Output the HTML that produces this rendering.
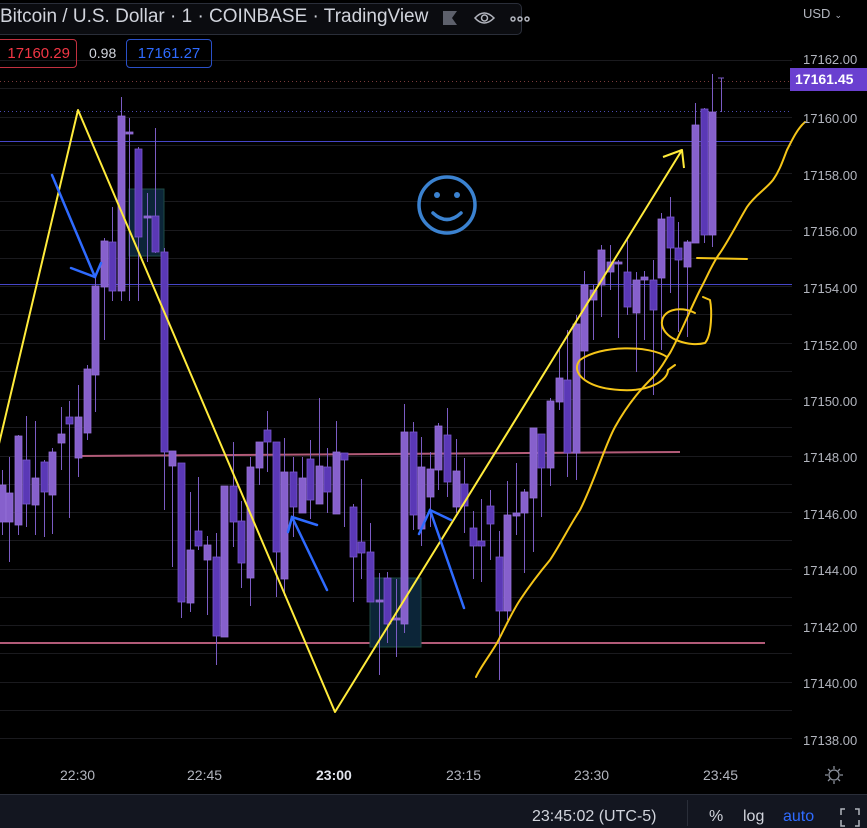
<!DOCTYPE html>
<html><head><meta charset="utf-8">
<style>
html,body{margin:0;padding:0;background:#000;width:867px;height:828px;overflow:hidden;font-family:"Liberation Sans",sans-serif}
.abs{position:absolute}
.ax{position:absolute;left:803px;color:#b2b5be;font-size:13px;line-height:14px}
.tl{position:absolute;top:767px;color:#b2b5be;font-size:14px}
</style></head><body>
<svg id="c" class="abs" style="left:0;top:0" width="867" height="828" xmlns="http://www.w3.org/2000/svg">
<g id="grid" stroke="#1a1a1e" stroke-width="1"></g>
<line x1="0" y1="81.5" x2="792" y2="81.5" stroke="#7a3a3a" stroke-dasharray="1 3"/>
<line x1="0" y1="111.5" x2="792" y2="111.5" stroke="#4a4ab0" stroke-dasharray="1 3"/>
<line x1="0" y1="141.5" x2="792" y2="141.5" stroke="#4646c8"/>
<line x1="0" y1="284.5" x2="792" y2="284.5" stroke="#4646c8"/>
<line x1="78" y1="456" x2="680" y2="452" stroke="#b25b78" stroke-width="2"/>
<line x1="0" y1="643" x2="765" y2="643" stroke="#b25b78" stroke-width="2"/>
<rect x="129" y="189" width="35" height="67" fill="#0c2538" stroke="#1e4a44"/>
<rect x="370" y="578" width="51" height="69" fill="#0c2538" stroke="#1e4a44"/>
<g id="cd"></g>
<g fill="none" stroke="#ffeb3b" stroke-width="2" stroke-linejoin="round">
<polyline points="-2,448 78,110 335,712 682,150"/>
<polyline points="663,157 682,150 684,168"/>
</g>
<g fill="none" stroke="#f5c518" stroke-width="2" stroke-linecap="round" stroke-linejoin="round">
<path d="M476,677 C480,668 490,655 497,643 C505,628 512,612 520,600 C530,585 540,572 550,560 C560,545 570,525 580,510 C595,480 605,445 615,427 C630,400 645,385 653,377 C662,368 665,360 670,353 C680,335 690,310 700,290 C708,275 713,262 720,253 C730,238 738,222 747,207 C755,195 765,190 773,180 C780,170 783,160 787,150 C793,138 798,128 805,122"/>
<path d="M667,357 C650,345 600,345 580,360 C570,372 585,388 620,390 C650,392 668,380 668,370 L675,365"/>
<path d="M695,313 C680,305 660,310 662,325 C665,340 690,347 705,343 C712,335 712,310 710,300 L703,297"/>
<line x1="697" y1="258" x2="747" y2="259"/>
</g>
<g fill="none" stroke="#2f6bff" stroke-width="2.5" stroke-linecap="round">
<line x1="52" y1="175" x2="95" y2="277"/><polyline points="71,268 95,277 101,263"/>
<line x1="327" y1="590" x2="292" y2="517"/><polyline points="288,532 292,517 317,525"/>
<line x1="464" y1="608" x2="430" y2="510"/><polyline points="419,534 430,510 451,520"/>
</g>
<g fill="none" stroke="#3b82d0" stroke-width="3.5" stroke-linecap="round">
<circle cx="447" cy="205" r="28"/>
<path d="M433,213 Q447,226 461,213"/>
</g>
<circle cx="437" cy="195" r="3" fill="#3b82d0"/><circle cx="457" cy="195" r="3" fill="#3b82d0"/>
<line x1="0" y1="794.5" x2="867" y2="794.5" stroke="#2a2e39"/>
<rect x="0" y="795" width="867" height="33" fill="#131620"/>
<line x1="687.5" y1="800" x2="687.5" y2="826" stroke="#2a2e39"/>
<rect x="790" y="68" width="77" height="23" fill="#6a40d0"/>
<g fill="none" stroke="#8a8f9a" stroke-width="1.3">
<circle cx="834" cy="775" r="5"/>
<path d="M834,766v3M834,781v3M825,775h3M840,775h3M828,769l2,2M838,779l2,2M840,769l-2,2M828,781l2,-2"/>
</g>
<g fill="none" stroke="#b2b5be" stroke-width="1.5">
<path d="M841,815v-6h4M855,809h4v6M841,820v6h4M859,820v6h-4"/>
</g>
</svg>

<div class="abs" style="left:-6px;top:3px;width:526px;height:30px;border:1px solid #2a2e39;border-radius:5px;background:#0b0c10"></div>
<div class="abs" style="left:0;top:6px;font-size:19px;color:#d1d4dc;white-space:nowrap">Bitcoin / U.S. Dollar · 1 · COINBASE · TradingView</div>
<svg class="abs" style="left:440px;top:9px" width="90" height="20">
<path d="M3,2h14l-5,7l5,7h-14z" fill="#5d606b"/>
<g fill="none" stroke="#b2b5be" stroke-width="1.5"><path d="M35,9 Q44,-1 54,9 Q44,19 35,9z"/><circle cx="44.5" cy="9" r="3"/>
<circle cx="73" cy="10" r="2"/><circle cx="80" cy="10" r="2"/><circle cx="87" cy="10" r="2"/></g>
</svg>
<div class="abs" style="left:-4px;top:39px;width:79px;height:27px;border:1px solid #c2303f;border-radius:4px;color:#f23645;font-size:15px;line-height:27px;text-align:right;padding-right:0px"><span style="margin-right:6px">17160.29</span></div>
<div class="abs" style="left:89px;top:45px;color:#d1d4dc;font-size:14px">0.98</div>
<div class="abs" style="left:126px;top:39px;width:84px;height:27px;border:1px solid #2a50c8;border-radius:4px;color:#2f6bff;font-size:15px;line-height:27px;text-align:center">17161.27</div>

<div class="ax" style="top:7px">USD<span style="font-size:9px;margin-left:4px">&#8964;</span></div>
<div class="ax" style="top:53px">17162.00</div>
<div class="ax" style="top:72px;left:795px;color:#fff;font-weight:bold;font-size:14px">17161.45</div>
<div class="ax" style="top:112px">17160.00</div>
<div class="ax" style="top:169px">17158.00</div>
<div class="ax" style="top:225px">17156.00</div>
<div class="ax" style="top:282px">17154.00</div>
<div class="ax" style="top:339px">17152.00</div>
<div class="ax" style="top:395px">17150.00</div>
<div class="ax" style="top:451px">17148.00</div>
<div class="ax" style="top:508px">17146.00</div>
<div class="ax" style="top:564px">17144.00</div>
<div class="ax" style="top:621px">17142.00</div>
<div class="ax" style="top:677px">17140.00</div>
<div class="ax" style="top:734px">17138.00</div>

<div class="tl" style="left:60px">22:30</div>
<div class="tl" style="left:187px">22:45</div>
<div class="tl" style="left:316px;color:#e0e3eb;font-weight:bold">23:00</div>
<div class="tl" style="left:446px">23:15</div>
<div class="tl" style="left:574px">23:30</div>
<div class="tl" style="left:703px">23:45</div>

<div class="abs" style="left:532px;top:808px;color:#d1d4dc;font-size:16px">23:45:02 (UTC-5)</div>
<div class="abs" style="left:709px;top:808px;color:#d1d4dc;font-size:16px">%</div>
<div class="abs" style="left:743px;top:808px;color:#d1d4dc;font-size:16px">log</div>
<div class="abs" style="left:783px;top:808px;color:#2f6bff;font-size:16px">auto</div>

<script>
var NS="http://www.w3.org/2000/svg";
var g=document.getElementById('grid');
for(var y=60;y<=760;y+=28.25){var l=document.createElementNS(NS,'line');l.setAttribute('x1',0);l.setAttribute('x2',792);l.setAttribute('y1',Math.round(y)+.5);l.setAttribute('y2',Math.round(y)+.5);g.appendChild(l);}
var D=[
[2,485,522,470,535,'L'],[9,493,522,457,562,'L'],[18,436,525,435,535,'L'],[26,460,504,416,527,'D'],[35,478,505,421,535,'L'],[44,462,492,460,537,'D'],[52,452,495,448,534,'L'],[61,434,443,407,470,'L'],[69,417,424,401,518,'D'],[78,417,458,385,477,'L'],
[87,369,433,365,440,'L'],[95,286,375,277,412,'L'],[104,241,287,238,340,'L'],[112,242,291,207,301,'D'],[121,116,291,97,301,'L'],[129,132,134,118,301,'L'],[138,149,237,147,301,'D'],[147,216,218,193,262,'L'],[155,216,252,128,253,'D'],[164,252,452,248,510,'D'],
[172,451,466,451,567,'L'],[181,463,602,463,618,'D'],[190,550,603,492,612,'L'],[198,531,546,477,550,'D'],[207,545,560,536,615,'L'],[216,557,636,533,665,'D'],[224,486,637,486,637,'L'],[233,486,522,442,547,'D'],[241,521,563,501,588,'D'],[250,467,578,457,606,'L'],
[259,442,468,442,485,'L'],[267,430,442,411,472,'D'],[276,442,552,442,597,'D'],[284,472,579,438,596,'L'],[293,472,507,457,537,'D'],[302,478,513,457,513,'L'],[310,459,500,440,519,'D'],[319,466,504,398,504,'L'],[327,467,492,448,513,'D'],[336,452,514,421,514,'L'],
[344,453,460,453,527,'D'],[353,507,557,504,602,'D'],[361,542,553,479,579,'D'],[370,552,602,523,602,'D'],[379,600,602,573,675,'L'],[387,578,624,572,643,'D'],[396,618,620,579,657,'L'],[404,432,624,404,633,'L'],[413,432,515,422,530,'D'],[421,467,529,437,546,'L'],
[430,469,497,452,527,'L'],[438,426,470,423,490,'L'],[447,435,482,408,497,'D'],[456,471,507,439,513,'L'],[464,484,506,458,533,'D'],[473,528,546,511,579,'D'],[481,541,546,499,582,'D'],[490,506,524,490,560,'D'],[499,557,611,531,680,'D'],[507,515,611,481,620,'L'],
[516,513,516,463,535,'L'],[524,492,513,489,573,'L'],[533,428,498,428,552,'L'],[541,434,468,434,517,'D'],[550,401,468,398,486,'L'],[559,378,402,350,410,'L'],[567,380,453,330,477,'D'],[576,324,453,315,480,'L'],[584,285,351,271,380,'L'],[593,290,300,285,340,'L'],
[601,250,285,245,317,'L'],[610,262,272,245,290,'L'],[618,262,264,260,338,'L'],[627,272,307,240,315,'D'],[636,280,313,272,372,'L'],[644,277,280,271,340,'L'],[653,280,310,260,395,'D'],[661,219,278,213,350,'L'],[670,217,248,197,293,'D'],[678,248,260,222,332,'D'],
[687,242,267,240,337,'L'],[695,125,243,103,243,'L'],[704,109,235,108,243,'D'],[712,112,235,74,247,'L']
];
var cd=document.getElementById('cd');
D.forEach(function(d){
 var w=document.createElementNS(NS,'line');w.setAttribute('x1',d[0]+.5);w.setAttribute('x2',d[0]+.5);w.setAttribute('y1',d[3]);w.setAttribute('y2',d[4]);w.setAttribute('stroke','#7b5cc4');cd.appendChild(w);
 var r=document.createElementNS(NS,'rect');r.setAttribute('x',d[0]-3);r.setAttribute('width',7);r.setAttribute('y',d[1]);r.setAttribute('height',Math.max(2,d[2]-d[1]));
 r.setAttribute('fill',d[5]=='L'?'#8660cc':'#5a38b6');r.setAttribute('stroke',d[5]=='L'?'#9470d8':'#7a58cc');r.setAttribute('stroke-width','0.8');cd.appendChild(r);
});
var w=document.createElementNS(NS,'path');w.setAttribute('d','M721.5,78V112M718,78h6');w.setAttribute('stroke','#7b5cc4');w.setAttribute('fill','none');cd.appendChild(w);
</script>
</body></html>
